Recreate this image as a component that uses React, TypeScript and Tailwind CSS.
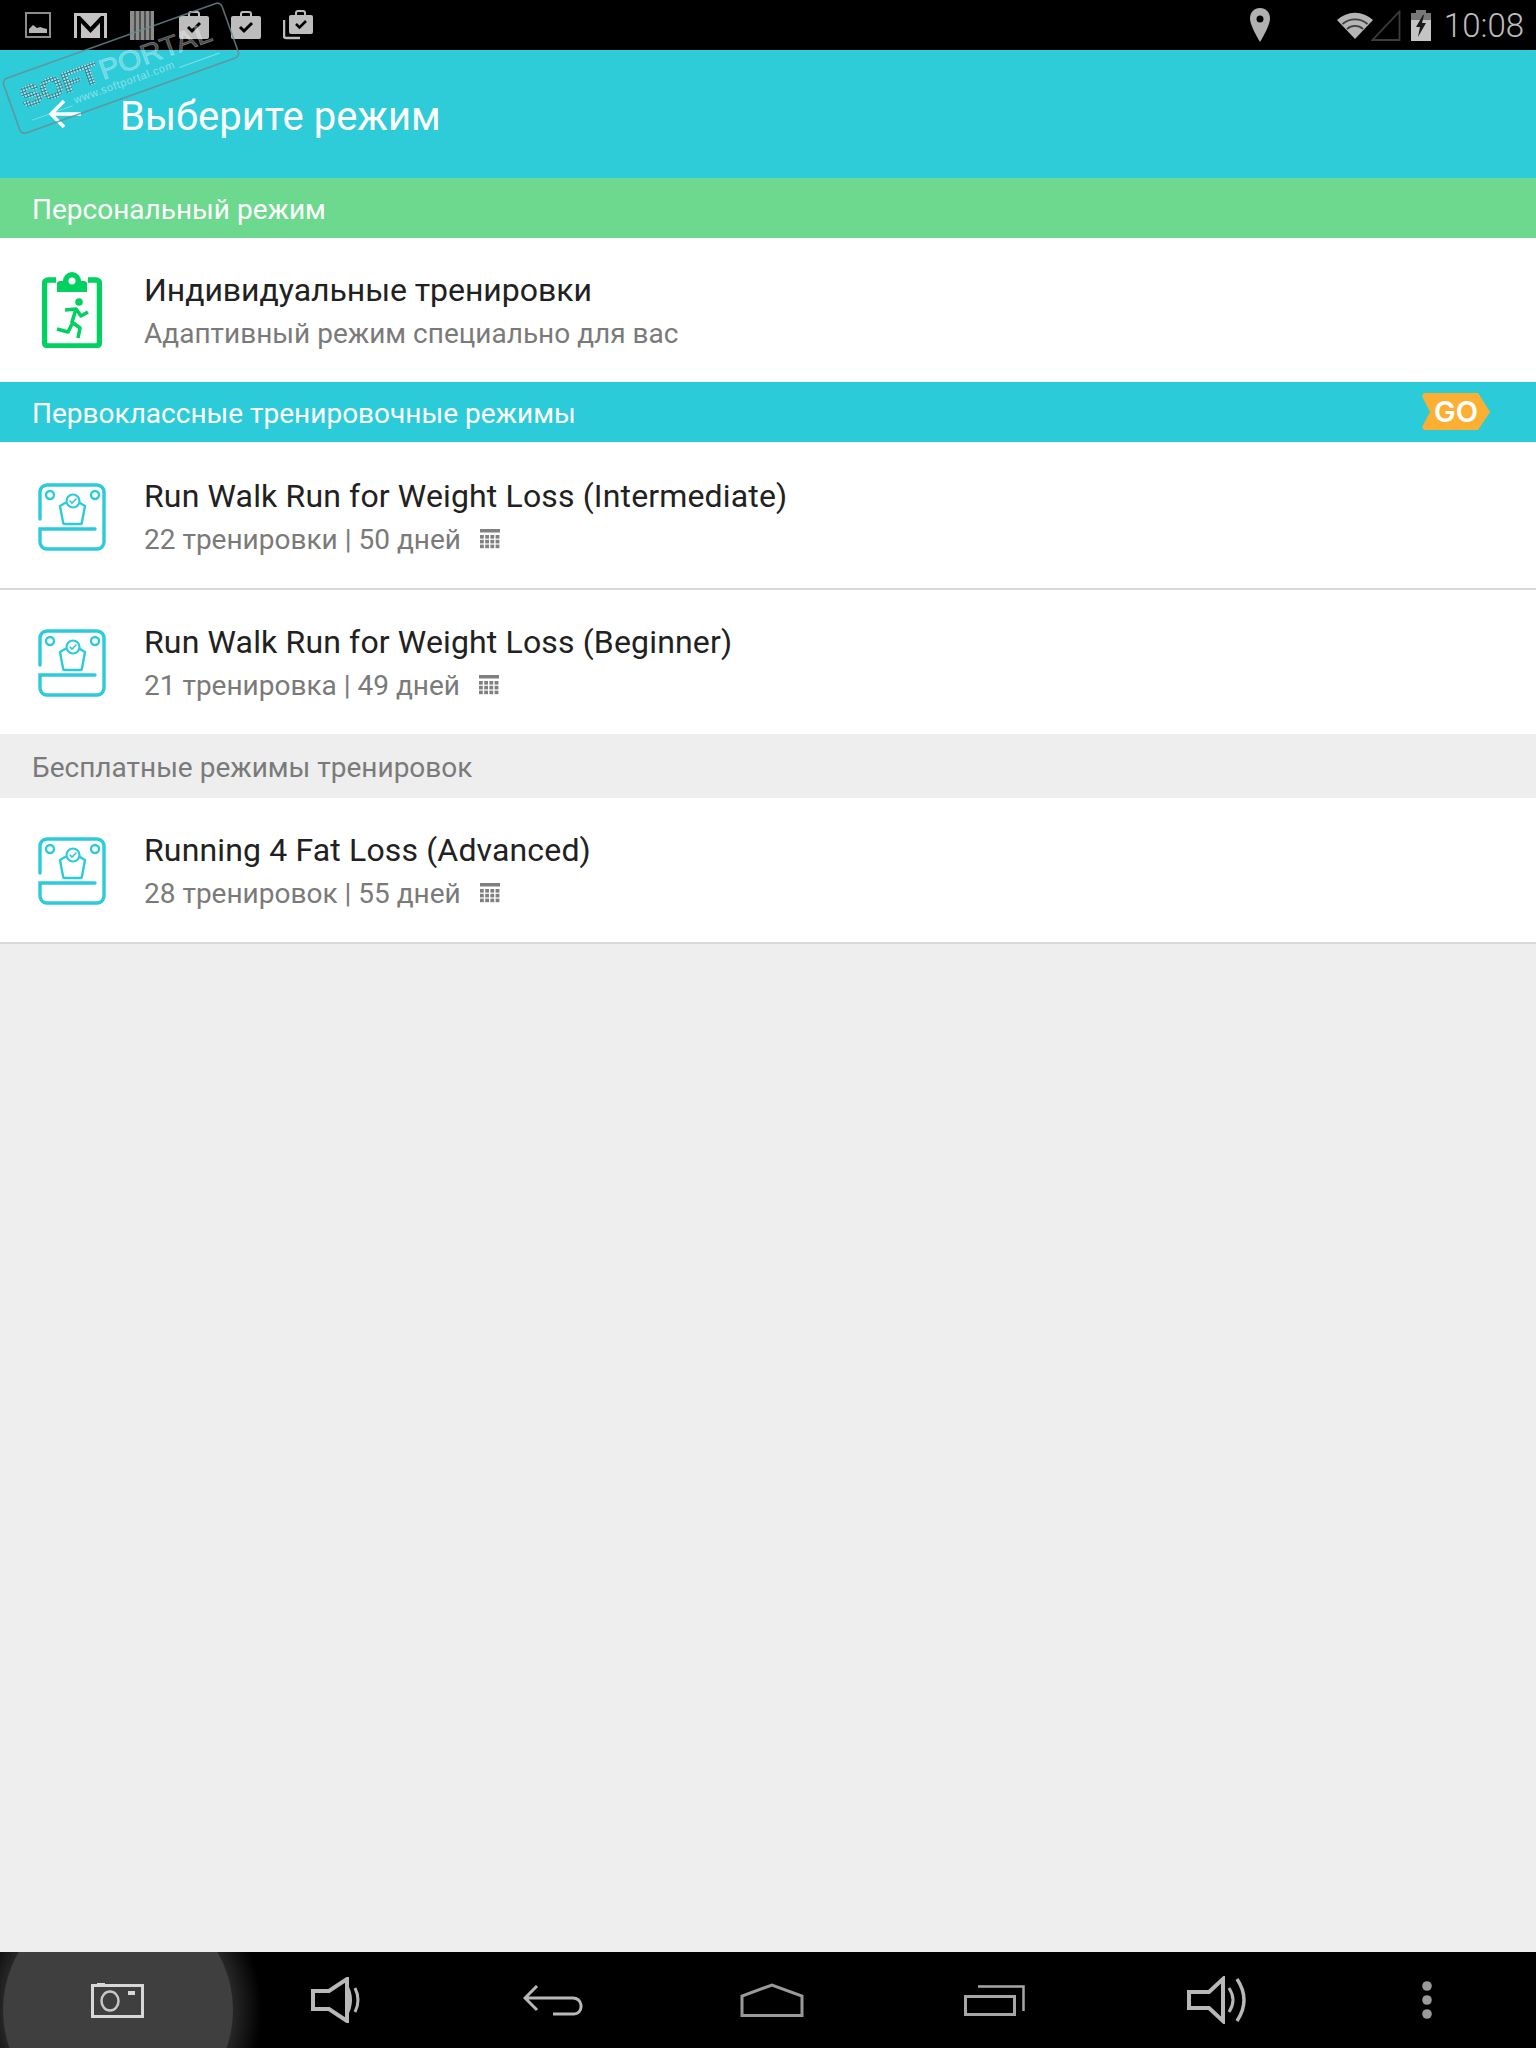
const FONT = "font-['Roboto',sans-serif]";

function Watermark() {
  return (
    <svg className="absolute left-0 top-0" width="250" height="145" viewBox="0 0 250 145" fill="none">
      <defs>
        <pattern id="dots" width="3" height="3" patternUnits="userSpaceOnUse">
          <rect width="3" height="3" fill="#2f7f8c" />
          <rect width="2" height="2" fill="#a0e8ee" />
        </pattern>
      </defs>
      <g transform="rotate(-19.7 2 80)">
        <rect x="2" y="80" width="232" height="58" rx="5" stroke="#6b8a90" strokeOpacity="0.8" strokeWidth="1.600" />
        <text x="14" y="114" fontFamily="Liberation Sans" fontWeight="700" fontSize="29" textLength="81" lengthAdjust="spacingAndGlyphs" stroke="url(#dots)" strokeWidth="1.500" fill="url(#dots)">SOFT</text>
        <text x="97" y="114" fontFamily="Liberation Sans" fontSize="28" textLength="118" lengthAdjust="spacingAndGlyphs" stroke="#ffffff" strokeOpacity="0.3" strokeWidth="0.800" fill="#ffffff" fillOpacity="0.3">PORTAL</text>
        <text x="63" y="127" fontFamily="Liberation Sans" fontSize="11" textLength="106" fill="#ffffff" fillOpacity="0.45">www.softportal.com</text>
        <path d="M17 128H60M173 128H216" stroke="#ffffff" strokeOpacity="0.4" strokeWidth="1" />
      </g>
    </svg>
  );
}

function Bag() {
  return (
    <svg width="30" height="30" viewBox="0 0 30 30" fill="none">
      <path d="M10 7V4a2 2 0 0 1 2-2h6a2 2 0 0 1 2 2v3" stroke="#bdbdbd" strokeWidth="2" />
      <rect x="0" y="6" width="30" height="23" rx="2" fill="#bdbdbd" />
      <path d="M9 17l4 4 8-8" stroke="#000" strokeWidth="3" />
    </svg>
  );
}

function StatusBar() {
  return (
    <div className="flex h-[50px] items-center bg-black pl-[25px] pr-[12px]">
      <svg width="26" height="26" viewBox="0 0 26 26" fill="none">
        <rect x="1" y="1" width="24" height="24" stroke="#8c8c8c" strokeWidth="2" />
        <path d="M4 21v-4l4-4 4 3 3-1 3 1 4 1v4z" fill="#b5b5b5" />
      </svg>
      <svg className="ml-[23px]" width="33" height="25" viewBox="0 0 33 25">
        <rect width="33" height="25" fill="#c4c4c4" />
        <path d="M3 25V3h3l10.500 11L27 3h3v22h-4V10l-9.500 10L7 10v15z" fill="#000" />
      </svg>
      <svg className="ml-[23px]" width="24" height="29" viewBox="0 0 24 29">
        <rect width="24" height="29" fill="#8d8d8d" />
        <path d="M5 0v29M10 0v29M15 0v29M20 0v29" stroke="#3a3a3a" strokeWidth="1.500" />
      </svg>
      <div className="ml-[25px]">
        <Bag />
      </div>
      <div className="ml-[22px]">
        <Bag />
      </div>
      <svg className="ml-[22px]" width="30" height="30" viewBox="0 0 30 30" fill="none">
        <path d="M1 10v16a2 2 0 0 0 2 2h14" stroke="#bdbdbd" strokeWidth="2.500" />
        <path d="M13 6V3a2 2 0 0 1 2-2h5a2 2 0 0 1 2 2v3" stroke="#bdbdbd" strokeWidth="2" />
        <rect x="6" y="5" width="24" height="19" rx="2" fill="#bdbdbd" />
        <path d="M13 14l3.500 3.500 6.500-6.500" stroke="#000" strokeWidth="2.600" />
      </svg>
      <div className="flex-1" />
      <svg width="22" height="34" viewBox="0 0 22 34">
        <path d="M11 0C5 0 1 4.500 1 10.500 1 18 11 34 11 34s10-16 10-23.500C21 4.500 17 0 11 0z" fill="#b0b0b0" />
        <circle cx="11" cy="11" r="3.500" fill="#000" />
      </svg>
      <svg className="ml-[65px]" width="38" height="28" viewBox="0 0 38 28" fill="none">
        <path d="M1 9a26 26 0 0 1 36 0L19 28z" fill="#b5b5b5" />
        <path d="M6.500 13a19 19 0 0 1 25 0M11 18a12 12 0 0 1 16 0" stroke="#000" strokeOpacity="0.65" strokeWidth="1.800" />
      </svg>
      <svg className="ml-[-3px]" width="30" height="31" viewBox="0 0 30 31" fill="none">
        <path d="M28.500 1.500V30H1.500z" stroke="#3c3c3c" strokeWidth="1.800" />
      </svg>
      <svg className="ml-[10px]" width="20" height="31" viewBox="0 0 20 31">
        <rect x="5" y="0" width="10" height="3" fill="#777" />
        <rect x="0" y="3" width="20" height="8" fill="#777" />
        <rect x="0" y="10" width="20" height="21" fill="#c4c4c4" />
        <path d="M12 5L5 17h4l-2 10 8-14h-4l2-8z" fill="#1a1a1a" />
      </svg>
      <span className="ml-[13px] text-[33px] font-light leading-none text-[#bdbdbd]">10:08</span>
    </div>
  );
}

function ClipboardIcon() {
  return (
    <svg width="60" height="76" viewBox="0 0 60 76" fill="none">
      <path d="M14 8H6a3.500 3.500 0 0 0-3.500 3.500v59A3.500 3.500 0 0 0 6 74h48a3.500 3.500 0 0 0 3.500-3.500v-59A3.500 3.500 0 0 0 54 8h-8" stroke="#00d161" strokeWidth="5.500" />
      <path d="M15 20v-8a3 3 0 0 1 3-3h3a9 9 0 0 1 18 0h3a3 3 0 0 1 3 3v8z" fill="#00d161" />
      <circle cx="30" cy="9" r="3.500" fill="#fff" />
      <circle cx="37" cy="30" r="3.800" fill="#00d161" />
      <path d="M23 38l11-1-4 13 8 6-2 10M30 52l-4 8-11-3M34 37l5 7 7-4" stroke="#00d161" strokeWidth="3.600" strokeLinejoin="round" />
    </svg>
  );
}

function ScaleIcon() {
  return (
    <svg width="68" height="68" viewBox="0 0 68 68" fill="none" stroke="#2ccbd9" strokeLinecap="round">
      <path d="M2 36V9a7 7 0 0 1 7-7h50a7 7 0 0 1 7 7v50a7 7 0 0 1-7 7H9a7 7 0 0 1-7-7V46h55" strokeWidth="3.400" />
      <circle cx="12" cy="12" r="4" strokeWidth="2.400" />
      <circle cx="57" cy="12" r="4" strokeWidth="2.400" />
      <path d="M27 20l-5 3 3 16a2 2 0 0 0 2 2h15a2 2 0 0 0 2-2l3-16-5-3" strokeWidth="2.400" />
      <circle cx="35" cy="18" r="6.500" strokeWidth="2.200" />
      <path d="M32 18l2 2 4-4" strokeWidth="1.600" />
    </svg>
  );
}

function CalendarIcon() {
  const cells = [];
  for (let r = 0; r < 3; r++) {
    for (let c = 0; c < 4; c++) {
      cells.push(<rect key={`${r}-${c}`} x={c * 5.200} y={6 + r * 4.800} width="3.800" height="3.600" fill="#808080" />);
    }
  }
  return (
    <svg width="20" height="20" viewBox="0 0 20 20">
      <rect width="20" height="3.500" fill="#808080" />
      {cells}
    </svg>
  );
}

function PlanRow({ title, meta, height, divider }: { title: string; meta: string; height: string; divider?: boolean }) {
  return (
    <div className={`flex items-center bg-white pl-[38px] ${height} ${divider ? 'border-b-2 border-[#d9d9d9]' : ''}`}>
      <ScaleIcon />
      <div className="ml-[38px] pt-[1px]">
        <div className="text-[32px] leading-[40px] tracking-[0.15px] text-[#212121]">{title}</div>
        <div className="mt-[5px] flex items-center text-[28px] leading-[38px] text-[#7a7a7a]">
          {meta}
          <span className="ml-[19px] mb-[2px]">
            <CalendarIcon />
          </span>
        </div>
      </div>
    </div>
  );
}

function NavBar() {
  const s = '#b8b8b8';
  return (
    <div className="relative flex h-[96px] items-center overflow-hidden bg-black">
      <div className="absolute left-[-26px] top-[-86px] h-[288px] w-[288px] rounded-full bg-[radial-gradient(circle_closest-side,#2a2a2a_78%,#000000_100%)]" />
      <div className="absolute left-[3px] top-[-57px] h-[230px] w-[230px] rounded-full bg-[#3f3f3f]" />
      <svg className="relative ml-[91px]" width="53" height="36" viewBox="0 0 53 36" fill="none">
        <path d="M6 3V1h8v2" fill="#ddd" />
        <rect x="1.500" y="3.500" width="50" height="31" stroke="#d8d8d8" strokeWidth="3" />
        <ellipse cx="19" cy="19" rx="8.500" ry="9.500" stroke="#c8c8c8" strokeWidth="2.500" />
        <rect x="37" y="9" width="7" height="4" fill="#d8d8d8" />
      </svg>
      <svg className="relative ml-[167px]" width="49" height="46" viewBox="0 0 49 46" fill="none">
        <path d="M2 14h16L36 2v42L18 32H2z" stroke={s} strokeWidth="4" />
        <path d="M36 6q10 17 0 34" fill={s} />
        <path d="M44 11q6 12 0 24" stroke={s} strokeWidth="3" />
      </svg>
      <svg className="relative ml-[163px]" width="60" height="31" viewBox="0 0 60 31" fill="none">
        <path d="M14 1L2 13l12 12M2 13h48a8 8 0 0 1 8 7v2a7 7 0 0 1-7 7H30" stroke={s} strokeWidth="3" />
      </svg>
      <svg className="relative ml-[157px]" width="64" height="34" viewBox="0 0 64 34" fill="none">
        <path d="M2 32.500V13L32 2l30 11v19.500z" stroke="#9a9a9a" strokeWidth="3" />
      </svg>
      <svg className="relative ml-[160px]" width="61" height="31" viewBox="0 0 61 31" fill="none">
        <rect x="1.500" y="11.500" width="49" height="18" stroke="#a6a6a6" strokeWidth="3" />
        <path d="M14 1.500h45.500V26" stroke="#a6a6a6" strokeWidth="2.500" />
      </svg>
      <svg className="relative ml-[162px]" width="60" height="48" viewBox="0 0 60 48" fill="none">
        <path d="M2 16h20L36 3v42L22 32H2z" stroke={s} strokeWidth="4" />
        <path d="M42 12q8 12 0 24" stroke={s} strokeWidth="3" />
        <path d="M50 3q14 21 0 42" stroke={s} strokeWidth="3.500" />
      </svg>
      <svg className="relative ml-[175px]" width="10" height="38" viewBox="0 0 10 38" fill="#9a9a9a">
        <ellipse cx="5" cy="5" rx="4.800" ry="4.800" />
        <ellipse cx="5" cy="19" rx="4.800" ry="4.800" />
        <ellipse cx="5" cy="33" rx="4.800" ry="4.800" />
      </svg>
    </div>
  );
}

export default function App() {
  return (
    <div className={`relative flex h-[2048px] w-[1536px] flex-col overflow-hidden bg-[#eeeeee] ${FONT}`}>
      <StatusBar />
      <div className="flex h-[128px] items-center bg-[#2ecbd9] pl-[48px]">
        <svg width="33" height="30" viewBox="0 0 33 30" fill="none" stroke="#fff" strokeWidth="3.500">
          <path d="M33 15H3M16 2L3 15l13 13" />
        </svg>
        <span className="ml-[39px] pt-[5px] text-[40px] leading-none text-white">Выберите режим</span>
      </div>

      <div className="flex h-[60px] items-center bg-[#6dd98f] pl-[32px] pt-[3px] text-[28px] text-white">Персональный режим</div>
      <div className="flex h-[144px] items-center bg-white pl-[42px]">
        <ClipboardIcon />
        <div className="ml-[42px] pt-[3px]">
          <div className="text-[32px] leading-[40px] tracking-[-0.05px] text-[#212121]">Индивидуальные тренировки</div>
          <div className="mt-[5px] text-[28px] leading-[38px] text-[#7a7a7a]">Адаптивный режим специально для вас</div>
        </div>
      </div>

      <div className="flex h-[60px] items-center justify-between bg-[#2ccbd9] pl-[32px] pr-[46px] text-[28px] text-white">
        <span className="pt-[3px]">Первоклассные тренировочные режимы</span>
        <svg width="68" height="38" viewBox="0 0 68 38">
          <path d="M2 0H56L68 19 56 37H2L0 34 8 19 0 3z" fill="#fbb034" />
          <text x="34" y="29" textAnchor="middle" fontFamily="Inter" fontWeight="600" fontSize="29" fill="#fff">GO</text>
        </svg>
      </div>
      <PlanRow height="h-[148px] pt-[4px]" divider title="Run Walk Run for Weight Loss (Intermediate)" meta="22 тренировки | 50 дней" />
      <PlanRow height="h-[144px] pt-[2px]" title="Run Walk Run for Weight Loss (Beginner)" meta="21 тренировка | 49 дней" />

      <div className="flex h-[64px] items-center pl-[32px] pt-[3px] text-[28px] text-[#7a7a7a]">Бесплатные режимы тренировок</div>
      <PlanRow height="h-[146px] pt-[2px]" divider title="Running 4 Fat Loss (Advanced)" meta="28 тренировок | 55 дней" />

      <div className="flex-1" />
      <NavBar />
      <Watermark />
    </div>
  );
}
